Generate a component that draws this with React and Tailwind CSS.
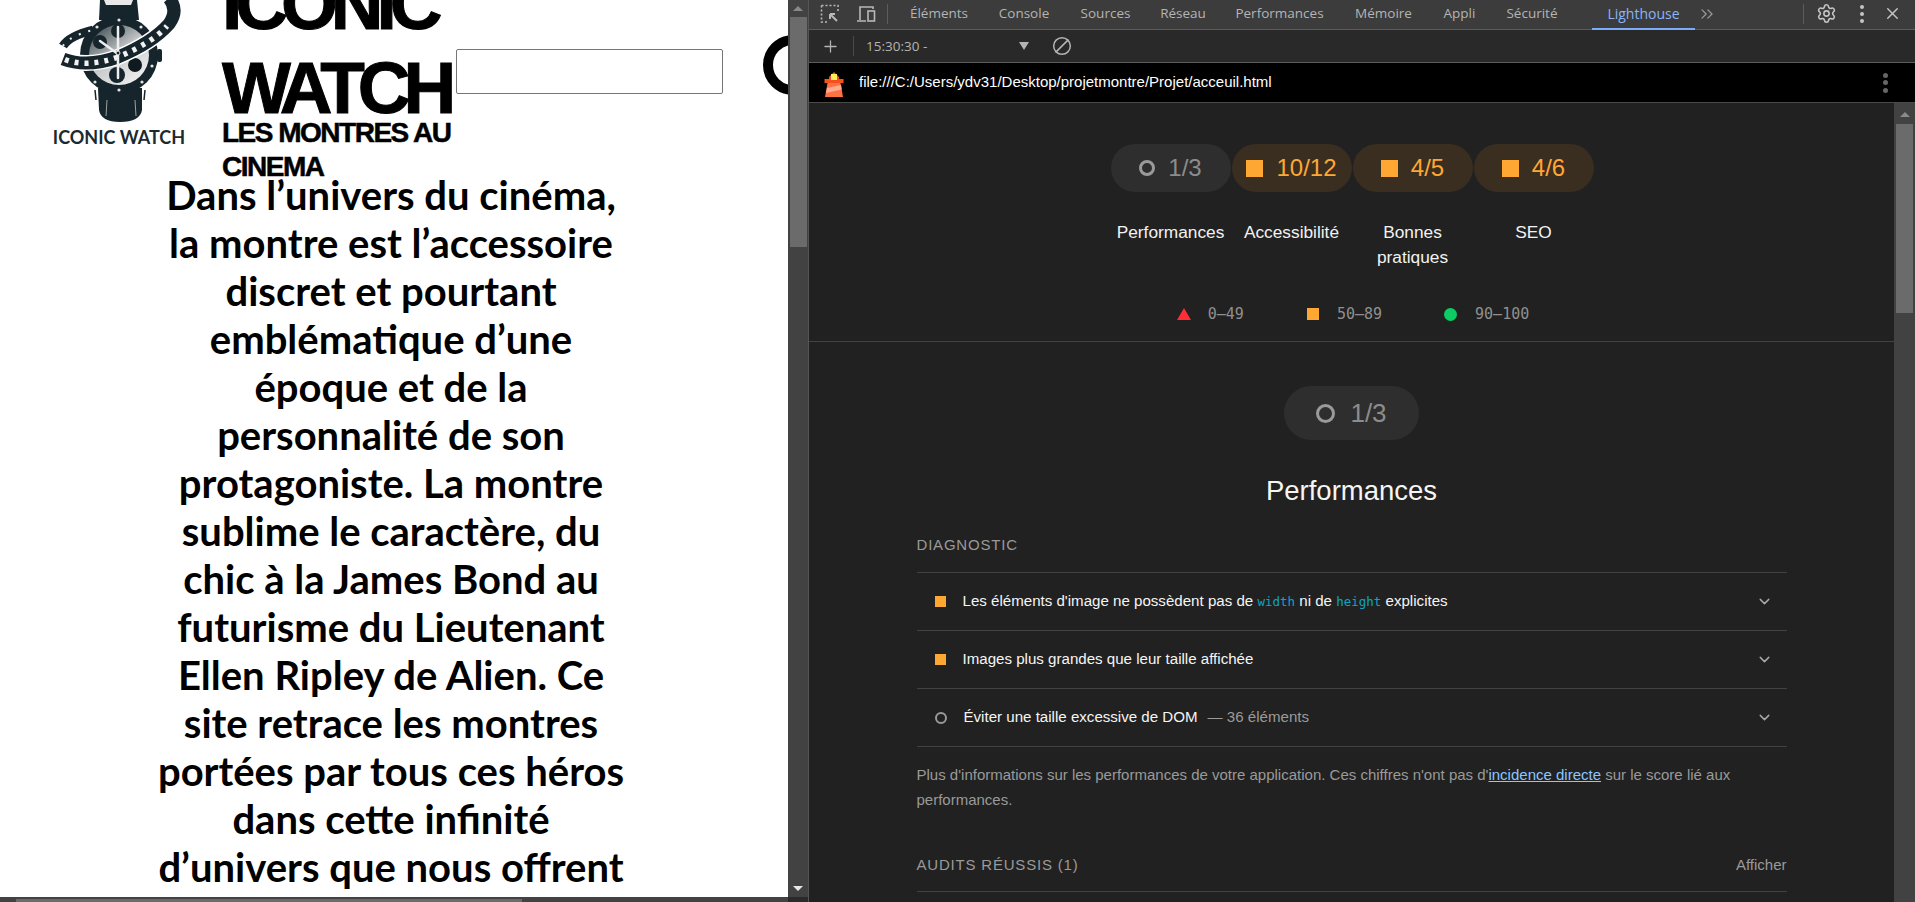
import { Plus, Ban, ChevronDown, ChevronsRight, Settings, X } from 'lucide-react';

const TABS = [
  { label: 'Éléments', cls: 'w-[88px]' },
  { label: 'Console', cls: 'w-[82px]' },
  { label: 'Sources', cls: 'w-[81px]' },
  { label: 'Réseau', cls: 'w-[74px]' },
  { label: 'Performances', cls: 'w-[119px]' },
  { label: 'Mémoire', cls: 'w-[89px]' },
  { label: 'Appli', cls: 'w-[63px]' },
  { label: 'Sécurité', cls: 'w-[82px]' },
];

const SCORES = [
  { label: 'Performances', value: '1/3', kind: 'gray' },
  { label: 'Accessibilité', value: '10/12', kind: 'orange' },
  { label: 'Bonnes pratiques', value: '4/5', kind: 'orange' },
  { label: 'SEO', value: '4/6', kind: 'orange' },
];

function WatchLogo() {
  return (
    <svg viewBox="0 0 150 130" className="block w-[150px] h-[130px]">
      <defs>
        <linearGradient id="dial" x1="0.1" y1="0" x2="0.9" y2="1">
          <stop offset="0" stopColor="#39464c" />
          <stop offset="0.5" stopColor="#c9cbcc" />
          <stop offset="1" stopColor="#f4f4f4" />
        </linearGradient>
      </defs>
      {/* strap */}
      <path d="M53 0 L52 20 L92 20 L90 0 Z" fill="#16242b" />
      <path d="M57 0 L59 5 L84 5 L86 0 Z" fill="#e8e8e8" />
      <path d="M51 88 L52 110 Q54 122 73 122 Q93 122 95 110 L95 88 Z" fill="#16242b" />
      <path d="M48 90 L49 100 M98 90 L97 100" stroke="#16242b" strokeWidth="1.5" />
      <path d="M60 100 L59 116 M88 100 L89 116" stroke="#9aa3a6" strokeWidth="1" />
      {/* case */}
      <rect x="110" y="49" width="5" height="13" rx="2" fill="#16242b" />
      <circle cx="72" cy="55" r="39" fill="#16242b" />
      <circle cx="72" cy="55" r="30" fill="url(#dial)" />
      <g fill="#e4e4e4">
        <circle cx="72" cy="20" r="1.6" /><circle cx="50" cy="27" r="1.6" /><circle cx="94" cy="27" r="1.6" />
        <circle cx="105" cy="66" r="1.6" /><circle cx="48" cy="82" r="1.6" />
        <circle cx="72" cy="90" r="1.6" /><circle cx="95" cy="82" r="1.6" />
      </g>
      {/* subdials */}
      <circle cx="71" cy="31" r="7" fill="#16242b" />
      <circle cx="53" cy="42" r="7" fill="#16242b" />
      <circle cx="70" cy="75" r="8" fill="#16242b" />
      <circle cx="88" cy="65" r="7" fill="#0e1a20" />
      {/* film strip */}
      <path d="M16 46 Q22 36 46 30" fill="none" stroke="#16242b" strokeWidth="9" />
      <path d="M16 46 Q22 36 46 30" fill="none" stroke="#eeeeee" strokeWidth="2" strokeDasharray="2 8" />
      <path d="M16 59 Q40 68 71 57 Q105 43 122 24 Q132 10 122 -2" fill="none" stroke="#ffffff" strokeWidth="16" />
      <path d="M16 59 Q40 68 71 57 Q105 43 122 24 Q132 10 122 -2" fill="none" stroke="#16242b" strokeWidth="13" />
      <path d="M18 59.5 Q40 68 71 57 Q105 43 120 26" fill="none" stroke="#f2f2f2" strokeWidth="5.5" strokeDasharray="4 6" />
      {/* hands */}
      <path d="M71 27 L71 78 M53 41 L71 54" stroke="#eeeeee" strokeWidth="2.5" strokeLinecap="round" />
      <circle cx="71" cy="53" r="2" fill="#16242b" stroke="#eee" />
    </svg>
  );
}

function LeftPage() {
  return (
    <div className="w-[788px] h-full overflow-hidden bg-white text-black">
      <div className="flex items-start h-[171px]">
        <div className="ml-[47px] w-[150px] shrink-0">
          <WatchLogo />
          <div className="pr-[6px] text-[18px] leading-[20px] font-bold text-center text-[#1b2a31] -mt-[3px] font-['Lato',sans-serif]">ICONIC WATCH</div>
        </div>
        <div className="ml-[25px] w-[231px] shrink-0 -mt-[38px] whitespace-nowrap font-['Liberation_Sans',Arial,sans-serif] font-bold">
          <h1 className="text-[73px] leading-[84px] tracking-[-7px] [-webkit-text-stroke:1px_black]">ICONIC<br />WATCH</h1>
          <h2 className="text-[28px] leading-[34px] tracking-[-1.5px] -mt-[14px] [-webkit-text-stroke:0.5px_black]">LES MONTRES AU<br />CINEMA</h2>
        </div>
        <input className="ml-[3px] mt-[49px] w-[267px] h-[45px] shrink-0 border border-[#767676] rounded-[2px] bg-white" />
        <div className="ml-[40px] mt-[35px] w-[60px] h-[60px] shrink-0 rounded-full border-[10px] border-black"></div>
      </div>
      <p className="w-[470px] ml-[156px] text-center text-[40px] leading-[48px] font-bold font-['Lato',sans-serif]">
        Dans l’univers du cinéma, la montre est l’accessoire discret et pourtant emblématique d’une époque et de la personnalité de son protagoniste. La montre sublime le caractère, du chic à la James Bond au futurisme du Lieutenant Ellen Ripley de Alien. Ce site retrace les montres portées par tous ces héros dans cette infinité d’univers que nous offrent
      </p>
    </div>
  );
}

function PageScrollbar() {
  return (
    <div className="w-[20px] h-full bg-[#424242] flex flex-col items-center relative">
      <div className="mt-[6px] w-0 h-0 border-x-[5px] border-x-transparent border-b-[5px] border-b-[#8a8a8a]"></div>
      <div className="mt-[6px] w-[17px] h-[230px] bg-[#6b6b6b]"></div>
      <div className="mt-auto mb-[6px] w-0 h-0 border-x-[5px] border-x-transparent border-t-[5px] border-t-[#e8e8e8]"></div>
    </div>
  );
}

function Toolbar() {
  return (
    <div className="h-[30px] pb-[2px] bg-[#3c3c3c] border-b border-[#5c5c5c] flex items-center text-[13.5px] text-[#b4b4b4] font-['Open_Sans',sans-serif]">
      <svg viewBox="0 0 20 20" className="ml-[11px] w-[20px] h-[20px] text-[#b8b8b8]" fill="none" stroke="currentColor" strokeWidth="1.6">
        <path d="M1.5 1.5 H18 V8 M1.5 1.5 V18 H8" strokeDasharray="2 2" />
        <path d="M10 10 L17 17 M10 10 H15 M10 10 V15" strokeWidth="2" />
      </svg>
      <svg viewBox="0 0 20 20" className="ml-[16px] w-[20px] h-[20px] text-[#b8b8b8]" fill="none" stroke="currentColor" strokeWidth="1.6">
        <path d="M4 16 V3 H17 V5 M1 17 H10" />
        <rect x="12" y="7" width="6.5" height="10" />
      </svg>
      <div className="ml-[11px] w-px h-[20px] bg-[#5c5c5c]"></div>
      <div className="ml-[7px] flex items-center">
        {TABS.map((t) => (
          <div key={t.label} className={`${t.cls} text-center whitespace-nowrap`}>{t.label}</div>
        ))}
      </div>
      <div className="relative ml-[19px] w-[103px] h-[27px] flex items-center justify-center text-[14px] text-[#8ab4f8]">
        Lighthouse
        <div className="absolute left-0 right-0 -bottom-[3px] h-[2px] bg-[#7cacf8]"></div>
      </div>
      <ChevronsRight className="ml-[2px] text-[#9a9a9a]" size={20} strokeWidth={1.5} />
      <div className="ml-[86px] w-px h-[20px] bg-[#5c5c5c]"></div>
      <Settings className="ml-[12px] text-[#c4c4c4]" size={21} strokeWidth={1.8} />
      <div className="ml-[23px] flex flex-col gap-[3px]">
        <span className="block w-[4px] h-[4px] rounded-full bg-[#c4c4c4]"></span>
        <span className="block w-[4px] h-[4px] rounded-full bg-[#c4c4c4]"></span>
        <span className="block w-[4px] h-[4px] rounded-full bg-[#c4c4c4]"></span>
      </div>
      <X className="ml-[19px] text-[#c4c4c4]" size={19} strokeWidth={1.8} />
    </div>
  );
}

function ReportBar() {
  return (
    <div className="h-[33px] bg-[#292929] border-b border-[#5c5c5c] flex items-center text-[#b4b4b4]">
      <Plus className="ml-[12px]" size={19} strokeWidth={1.6} />
      <div className="ml-[13px] w-px h-[20px] bg-[#4a4a4a]"></div>
      <span className="ml-[12px] w-[153px] text-[13.5px] font-['Open_Sans',sans-serif]">15:30:30 -</span>
      <div className="w-0 h-0 border-x-[5px] border-x-transparent border-t-[8px] border-t-[#b4b4b4]"></div>
      <Ban className="ml-[23px] -scale-x-100" size={20} strokeWidth={1.8} />
    </div>
  );
}

function UrlBar() {
  return (
    <div className="h-[40px] bg-black border-b border-[#4a4a4a] flex items-center font-['Liberation_Sans',Arial,sans-serif]">
      <svg viewBox="0 0 20 30" className="ml-[15px] w-[20px] h-[30px]">
        <path d="M5 9 L10 4 L15 9 V13 H5 Z" fill="#f4511e" />
        <rect x="0.5" y="11" width="19" height="4" fill="#f4511e" />
        <rect x="7" y="6" width="6" height="6" fill="#ffee58" />
        <path d="M3.5 15 H16.5 L19 29 H1 Z" fill="#ff7043" />
        <path d="M3 20 L17 17 L17.8 21.5 L2 25 Z" fill="#ffab91" />
      </svg>
      <span className="ml-[15px] text-[15px] text-white">file:///C:/Users/ydv31/Desktop/projetmontre/Projet/acceuil.html</span>
      <div className="ml-auto mr-[27px] flex flex-col gap-[2.5px]">
        <span className="block w-[5px] h-[5px] rounded-full bg-[#666]"></span>
        <span className="block w-[5px] h-[5px] rounded-full bg-[#666]"></span>
        <span className="block w-[5px] h-[5px] rounded-full bg-[#666]"></span>
      </div>
    </div>
  );
}

function ScoreGauge({ score }) {
  const orange = score.kind === 'orange';
  return (
    <div className="w-[121px] flex flex-col items-center">
      <div className={`w-[120px] h-[48px] rounded-full flex items-center justify-center gap-[13px] text-[24px] ${orange ? 'bg-[#392e20] text-[#ffa733]' : 'bg-[#2e2e2e] text-[#8c8c8c]'}`}>
        {orange
          ? <span className="w-[17px] h-[17px] bg-[#ffa733]"></span>
          : <span className="w-[16px] h-[16px] rounded-full border-[3px] border-[#9a9a9a]"></span>}
        <span>{score.value}</span>
      </div>
      <div className="mt-[28px] w-[110px] text-center text-[17.3px] leading-[25px] text-[#f2f2f2]">{score.label}</div>
    </div>
  );
}

function Row({ icon, children }) {
  return (
    <div className="h-[58px] border-b border-[#424242] flex items-center pl-[18px] pr-[14px] text-[15.1px] text-[#f5f5f5]">
      {icon === 'ring'
        ? <span className="w-[12px] h-[12px] rounded-full border-2 border-[#9a9a9a] shrink-0"></span>
        : <span className="w-[11px] h-[11px] bg-[#ffa733] shrink-0"></span>}
      <div className="ml-[17px] flex-1">{children}</div>
      <ChevronDown className="text-[#a8a8a8]" size={17} strokeWidth={2} />
    </div>
  );
}

function Report() {
  return (
    <div className="flex-1 min-w-0 overflow-hidden bg-[#212121] font-['Liberation_Sans',Arial,sans-serif]">
      <div className="h-[239px] border-b border-[#424242] pt-[41px] flex flex-col items-center">
        <div className="flex pl-[1px]">
          {SCORES.map((s) => <ScoreGauge key={s.label} score={s} />)}
        </div>
        <div className="mt-[34px] pl-[3px] text-[15px] leading-[20px] text-[#8f8f8f] font-['DejaVu_Sans_Mono',monospace] flex items-center">
          <span className="w-0 h-0 border-x-[7px] border-x-transparent border-b-[12px] border-b-[#ff2e36]"></span>
          <span className="ml-[17px]">0–49</span>
          <span className="ml-[63px] w-[12px] h-[12px] bg-[#ffa733]"></span>
          <span className="ml-[18px]">50–89</span>
          <span className="ml-[62px] w-[13px] h-[13px] rounded-full bg-[#0ccc63]"></span>
          <span className="ml-[18px]">90–100</span>
        </div>
      </div>
      <div className="mx-auto w-[870px]">
        <div className="mx-auto mt-[44px] w-[135px] h-[54px] rounded-full bg-[#2e2e2e] flex items-center justify-center gap-[15px] text-[26px] text-[#8c8c8c]">
          <span className="w-[19px] h-[19px] rounded-full border-[3px] border-[#9a9a9a]"></span>
          <span>1/3</span>
        </div>
        <div className="mt-[33px] text-center text-[27.5px] leading-[36px] text-[#f5f5f5]">Performances</div>
        <div className="mt-[27px] pb-[18px] border-b border-[#424242] text-[15px] leading-[18px] tracking-[0.8px] text-[#9a9a9a]">DIAGNOSTIC</div>
        <Row icon="square">
          Les éléments d'image ne possèdent pas de{' '}
          <code className="font-['DejaVu_Sans_Mono',monospace] text-[12.5px] text-[#0ba5c5]">width</code> ni de{' '}
          <code className="font-['DejaVu_Sans_Mono',monospace] text-[12.5px] text-[#0ba5c5]">height</code> explicites
        </Row>
        <Row icon="square">Images plus grandes que leur taille affichée</Row>
        <Row icon="ring">
          Éviter une taille excessive de DOM
          <span className="ml-[10px] text-[#9a9a9a]">— 36 éléments</span>
        </Row>
        <p className="mt-[15px] text-[15px] leading-[25px] text-[#9a9a9a]">
          Plus d'informations sur les performances de votre application. Ces chiffres n'ont pas d'<a className="text-[#8ac7ff] underline">incidence directe</a> sur le score lié aux performances.
        </p>
        <div className="mt-[27px] h-[53px] border-b border-[#424242] flex items-center justify-between text-[15px] text-[#9a9a9a]">
          <span className="tracking-[0.8px]">AUDITS RÉUSSIS (1)</span>
          <span>Afficher</span>
        </div>
      </div>
    </div>
  );
}

function ReportScrollbar() {
  return (
    <div className="w-[21px] bg-[#424242] flex flex-col items-center">
      <div className="mt-[9px] w-0 h-0 border-x-[5px] border-x-transparent border-b-[5px] border-b-[#8a8a8a]"></div>
      <div className="mt-[7px] w-[17px] h-[189px] bg-[#6b6b6b]"></div>
    </div>
  );
}

export default function App() {
  return (
    <div className="flex w-[1915px] h-[902px] overflow-hidden bg-[#212121]">
      <div className="w-[808px] h-full flex flex-col shrink-0">
        <div className="flex flex-1 min-h-0">
          <LeftPage />
          <PageScrollbar />
        </div>
        <div className="h-[5px] flex bg-[#424242]">
          <div className="w-[788px] pl-[16px] pt-[2px]">
            <div className="w-[506px] h-[3px] bg-[#6b6b6b]"></div>
          </div>
          <div className="w-[20px] bg-[#2a2a2a]"></div>
        </div>
      </div>
      <div className="w-px bg-[#555]"></div>
      <div className="flex-1 min-w-0 h-full flex flex-col">
        <Toolbar />
        <ReportBar />
        <UrlBar />
        <div className="flex flex-1 min-h-0">
          <Report />
          <ReportScrollbar />
        </div>
      </div>
    </div>
  );
}
